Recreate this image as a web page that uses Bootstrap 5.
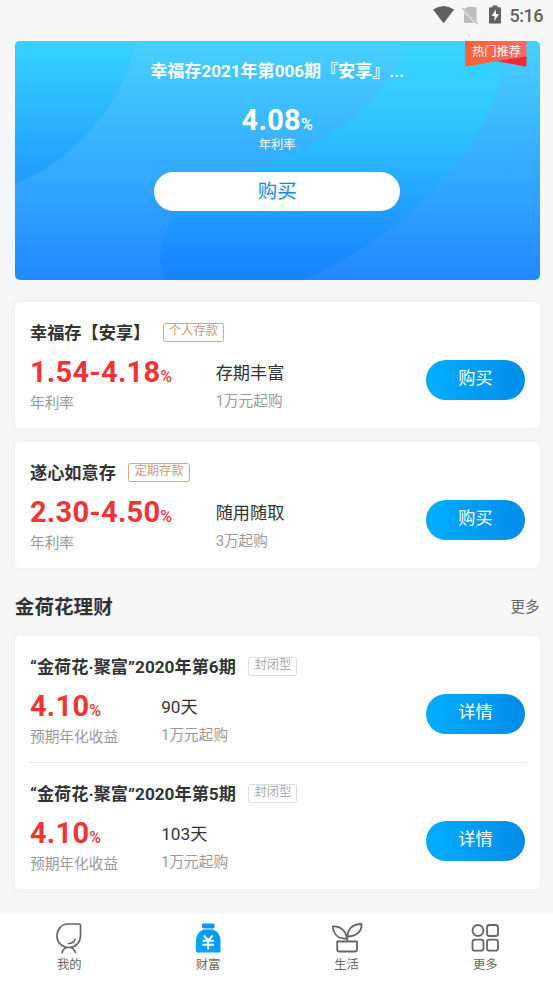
<!DOCTYPE html>
<html lang="zh-CN">
<head>
<meta charset="utf-8">
<meta name="viewport" content="width=device-width, initial-scale=1">
<title>财富</title>
<link href="https://cdn.jsdelivr.net/npm/bootstrap@5.3.0/dist/css/bootstrap.min.css" rel="stylesheet">
<style>
body{background:#f7f7f7;color:#333;font-family:Roboto,"Noto Sans CJK SC",sans-serif;width:553px;height:983px;overflow:hidden}
.status{height:40.5px;padding:5px 9px 0 0;color:#606060}
.clock{font-size:18px;line-height:21px;font-weight:500;letter-spacing:-.5px;width:34.5px;white-space:nowrap}
.main-col{padding:0 13.5px 0 14.8px}
.hero{height:239.5px;border-radius:5px;padding-top:18px}
.hero-bg{left:0;top:0}
.hero-title{font-size:17.1px;line-height:24px;font-weight:700;letter-spacing:-.03px}
.hero-rate{font-size:29px;line-height:34px;font-weight:700;margin-top:20px;letter-spacing:.3px}
.hero-rate small,.rate small{font-size:16px;font-weight:500;letter-spacing:0}
.hero-note{font-size:12.3px;line-height:16px;margin-top:-4.5px}
.hero-btn{width:246px;height:39.5px;margin-top:18.5px;font-size:19.5px;line-height:39.5px;color:#0c8ce9;background:#fff}
.ribbon{left:450.700px;top:0;width:62px;height:26px}
.ribbon span{left:0;top:0;width:62px;font-size:12.3px;line-height:23px}
.panel{background:#fff;border-radius:5px;box-shadow:0 0 6px rgba(220,232,228,.45)}
.product{height:126px;padding:18px 14.700px 0 15.2px}
.rule{height:1px;background:#e8e8e8;margin:0 14px}
.name{font-size:17.2px;line-height:26px;height:26px;font-weight:700}
.tagbox{font-size:12.3px;line-height:15px;height:19px;border:1.5px solid #d0a884;border-radius:2.5px;color:#c89d78;padding:0 5.2px;margin-left:12.3px;margin-top:-1px}
.tagbox.gray{border-color:#ddd;color:#aaa}
.body-row{margin-top:9px}
.c-wide{width:185.700px}
.c-slim{width:131.2px}
.rate{font-size:29px;line-height:34px;height:34px;color:#ee3535;font-weight:700;letter-spacing:.25px;white-space:nowrap}
.rate+.sub{line-height:28px}
.sub{font-size:14.7px;line-height:26px;color:#999;white-space:nowrap}
.term{font-size:17.2px;line-height:28px;padding-top:4px}
.term+.sub{line-height:28px}
.go{width:98.5px;height:39.5px;margin-top:5px;background:linear-gradient(90deg,#00aeff,#028be9);color:#fff;font-size:17.2px;line-height:37px}
.sec{height:68px;padding-top:11px}
.sec h2{font-size:19.6px;font-weight:700;line-height:28px}
.sec span{font-size:14.5px;color:#666}
.tabs{height:70px;background:#fff;margin:25px -1.5px 0 0;padding-top:8px}
.tabs svg{display:block;margin:0 auto}
.tab{flex:1 1 0;font-size:12.3px;line-height:18px;color:#666}
</style>
<script src="https://cdn.jsdelivr.net/npm/bootstrap@5.3.0/dist/js/bootstrap.bundle.min.js"></script>
</head>
<body>
<header class="status d-flex justify-content-end align-items-start">
  <svg width="77" height="21" viewBox="433 5 77 21">
    <path d="M433 9.5Q443.500 2.500 454.200 9.500L443.600 23.200Z" fill="#606060"/>
    <path d="M468 7H475Q476.500 7 476.500 8.500V21.500L464 9ZM464 12L474.500 23H465.500Q464 23 464 21.500Z" fill="#bdbdbd"/>
    <path d="M462.300 8L477.500 24" stroke="#bdbdbd" stroke-width="1.500"/>
    <path fill-rule="evenodd" d="M492.500 5.500h5v1.800h2.200q1.300 0 1.300 1.300v13.600q0 1.300-1.300 1.300h-9.400q-1.300 0-1.300-1.300V8.600q0-1.300 1.300-1.300h2.200ZM496 9.500l-4.500 6.500h3v5l4.500-7h-3Z" fill="#606060"/>
  </svg>
  <span class="clock">5:16</span>
</header>

<main class="main-col">
  <section class="hero position-relative overflow-hidden text-white text-center">
    <svg class="hero-bg position-absolute" width="525" height="240" viewBox="0 0 525 240" preserveAspectRatio="none">
      <defs>
        <linearGradient id="g1" x2="0" y2="1"><stop stop-color="#49d0ff"/><stop offset=".5" stop-color="#35adff"/><stop offset="1" stop-color="#2288ff"/></linearGradient>
        <linearGradient id="g2" x2="0" y2="1"><stop stop-color="#35d4ff"/><stop offset="1" stop-color="#2099ff"/></linearGradient>
        <linearGradient id="g3" x2="0" y2="1"><stop stop-color="#39d7ff"/><stop offset=".35" stop-color="#2fc5ff"/><stop offset=".65" stop-color="#22a4ff"/><stop offset="1" stop-color="#1780ff"/></linearGradient>
      </defs>
      <rect width="525" height="240" fill="url(#g1)"/>
      <path d="M0 0H120.500C110 64 52 124 0 143Z" fill="url(#g2)"/>
      <path d="M390 0C376 63 305 108 230 131C176 148 145 180 145 217Q146 230 151 240H286C372 204 442 137 475 68Q489 35 493 0Z" fill="url(#g3)"/>
    </svg>
    <div class="ribbon position-absolute">
      <svg class="d-block" width="62" height="26" viewBox="0 0 62 26">
        <defs><linearGradient id="rb"><stop stop-color="#ff6036"/><stop offset="1" stop-color="#ff6868"/></linearGradient></defs>
        <path d="M31 20L61.500 15V24.500Q61.500 26 60 25.500Z" fill="#f02b31"/>
        <path d="M0 0H61.500V15.500Q45 17.500 31 20.500L1.500 25.500Q0 25.500 0 24Z" fill="url(#rb)"/>
      </svg>
      <span class="position-absolute">热门推荐</span>
    </div>
    <div class="position-relative">
      <div class="hero-title">幸福存2021年第006期『安享』...</div>
      <div class="hero-rate">4.08<small>%</small></div>
      <div class="hero-note">年利率</div>
      <div class="hero-btn rounded-pill mx-auto">购买</div>
    </div>
  </section>

  <section class="panel" style="margin-top:22px">
    <div class="product">
      <div class="name d-flex align-items-center">幸福存【安享】<span class="tagbox fw-normal">个人存款</span></div>
      <div class="body-row d-flex">
        <div class="c-wide"><div class="rate">1.54-4.18<small>%</small></div><div class="sub">年利率</div></div>
        <div><div class="term">存期丰富</div><div class="sub">1万元起购</div></div>
        <div class="go rounded-pill text-center ms-auto">购买</div>
      </div>
    </div>
  </section>

  <section class="panel" style="margin-top:14px">
    <div class="product">
      <div class="name d-flex align-items-center">遂心如意存<span class="tagbox fw-normal">定期存款</span></div>
      <div class="body-row d-flex">
        <div class="c-wide"><div class="rate">2.30-4.50<small>%</small></div><div class="sub">年利率</div></div>
        <div><div class="term">随用随取</div><div class="sub">3万起购</div></div>
        <div class="go rounded-pill text-center ms-auto">购买</div>
      </div>
    </div>
  </section>

  <div class="sec d-flex align-items-center justify-content-between"><h2 class="m-0">金荷花理财</h2><span>更多</span></div>

  <section class="panel">
    <div class="product">
      <div class="name d-flex align-items-center">“金荷花·聚富”2020年第6期<span class="tagbox gray fw-normal">封闭型</span></div>
      <div class="body-row d-flex">
        <div class="c-slim"><div class="rate">4.10<small>%</small></div><div class="sub">预期年化收益</div></div>
        <div><div class="term">90天</div><div class="sub">1万元起购</div></div>
        <div class="go rounded-pill text-center ms-auto">详情</div>
      </div>
    </div>
    <div class="rule"></div>
    <div class="product">
      <div class="name d-flex align-items-center">“金荷花·聚富”2020年第5期<span class="tagbox gray fw-normal">封闭型</span></div>
      <div class="body-row d-flex">
        <div class="c-slim"><div class="rate">4.10<small>%</small></div><div class="sub">预期年化收益</div></div>
        <div><div class="term">103天</div><div class="sub">1万元起购</div></div>
        <div class="go rounded-pill text-center ms-auto">详情</div>
      </div>
    </div>
  </section>
</main>

<nav class="tabs d-flex text-center">
  <div class="tab">
    <svg width="34" height="34" viewBox="0 0 34 34" fill="none" stroke="#666" stroke-width="1.700" stroke-linecap="round">
      <path d="M16 2H27Q28.500 2 28.500 3.500V13.500C28.500 21 23 25.500 17 25.500C10 25.500 5 20.500 5 14C5 7.500 9.500 2 16 2Z"/>
      <path d="M16.500 21.500Q21.500 21.500 23 17.500M10 30.500Q11.500 26 15 25.500M23.500 30.500Q22 26.500 19 25.500"/>
    </svg>我的</div>
  <div class="tab">
    <svg width="34" height="34" viewBox="0 0 34 34">
      <defs><linearGradient id="bag" x1="0" y1="1" x2="1" y2="0"><stop stop-color="#00adff"/><stop offset="1" stop-color="#068fe9"/></linearGradient></defs>
      <path d="M12.500 1.500H22Q24.500 1.500 23.300 4Q24.500 6.500 22 6.500H12.500Q10 6.500 11.200 4Q10 1.500 12.500 1.500ZM12.500 7.500H22Q29.500 11 29.500 18.500V29Q29.500 30.500 28 30.500H6.500Q5 30.500 5 29V18.500Q5 11 12.500 7.500Z" fill="url(#bag)"/>
      <path d="M12.800 13.500L17.200 18.500L21.700 13.500M17.200 18.500V27.500M11.500 18.800H23M11.500 22.800H23" fill="none" stroke="#fff" stroke-width="1.900"/>
    </svg>财富</div>
  <div class="tab">
    <svg width="34" height="34" viewBox="0 0 34 34" fill="none" stroke="#666" stroke-width="1.800" stroke-linejoin="round">
      <path d="M7.200 19.500H27V27.500Q27 29.500 25 29.500H9.200Q7.200 29.500 7.200 27.500ZM17.200 19.500V14"/>
      <path d="M16.800 16.500C9 17 3.500 13 2.800 4.500C10.500 4 16 8.500 16.800 16.500ZM17.500 14.500C17.500 7.500 22 2 31.500 2C32 10 25.500 14.500 17.500 14.500Z"/>
    </svg>生活</div>
  <div class="tab">
    <svg width="34" height="34" viewBox="0 0 34 34" fill="none" stroke="#666" stroke-width="1.800">
      <circle cx="10" cy="8.500" r="5.500"/><rect x="19" y="3" width="11" height="11" rx="2.500"/><rect x="4.500" y="17.700" width="11" height="11" rx="2.500"/><rect x="19" y="17.700" width="11" height="11" rx="2.500"/>
    </svg>更多</div>
</nav>
</body>
</html>
